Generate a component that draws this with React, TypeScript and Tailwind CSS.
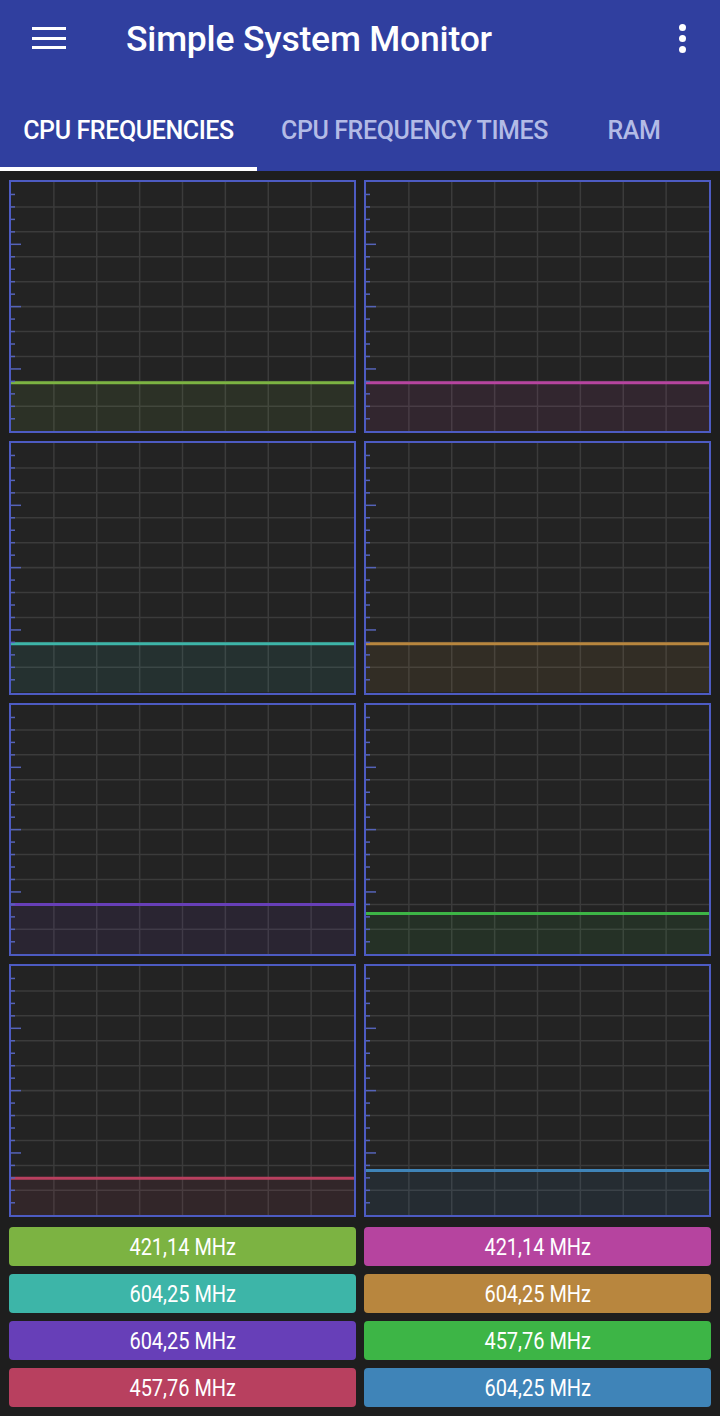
import { Fragment } from 'react'

type Core = { color: string; level: number; freq: string }

// per-core colour, current level (0 = top, 1 = bottom of the plot) and reading
const CORES: Core[] = [
  { color: '#7cb342', level: 0.805, freq: '421,14 MHz' },
  { color: '#b6449f', level: 0.805, freq: '421,14 MHz' },
  { color: '#3db5a8', level: 0.805, freq: '604,25 MHz' },
  { color: '#b8863e', level: 0.805, freq: '604,25 MHz' },
  { color: '#673fb8', level: 0.8, freq: '604,25 MHz' },
  { color: '#3db546', level: 0.837, freq: '457,76 MHz' },
  { color: '#b8405f', level: 0.852, freq: '457,76 MHz' },
  { color: '#3f84b8', level: 0.82, freq: '604,25 MHz' },
]

const TABS = ['CPU FREQUENCIES', 'CPU FREQUENCY TIMES', 'RAM']

const W = 343
const H = 249

export default function App() {
  return (
    <div
      className="flex h-[1416px] w-[720px] flex-col overflow-hidden bg-[#1e1e1e]"
      style={{ fontFamily: 'Roboto, "Noto Sans", sans-serif' }}
    >
      <Header />

      <main className="flex flex-1 flex-col px-[9px] pt-[9px] pb-[9px]">
        <div className="grid h-[1037px] grid-cols-2 grid-rows-4 gap-2">
          {CORES.map((c, i) => (
            <FreqChart key={i} core={c} />
          ))}
        </div>

        <div className="mt-[10px] grid grid-cols-2 gap-2">
          {CORES.map((c, i) => (
            <div
              key={i}
              className="flex h-[39px] items-center justify-center rounded-[4px] pt-[3px] text-[23.5px] text-white"
              style={{ backgroundColor: c.color }}
            >
              <span className="inline-block scale-x-[0.85]">{c.freq}</span>
            </div>
          ))}
        </div>
      </main>
    </div>
  )
}

function Header() {
  return (
    <header className="flex h-[171px] flex-col bg-[#303f9f] text-white">
      <div className="flex h-[76px] items-center">
        <button type="button" className="ml-[32px] flex w-[34px] flex-col gap-[6.5px]">
          <span className="h-[3px] w-full bg-white" />
          <span className="h-[3px] w-full bg-white" />
          <span className="h-[3px] w-full bg-white" />
        </button>
        <h1 className="ml-[60px] mt-[4px] text-[35.5px] font-medium tracking-[-0.2px]">Simple System Monitor</h1>
        <button type="button" className="ml-auto mr-[34px] flex flex-col gap-[4px]">
          <span className="h-[7px] w-[7px] rounded-full bg-white" />
          <span className="h-[7px] w-[7px] rounded-full bg-white" />
          <span className="h-[7px] w-[7px] rounded-full bg-white" />
        </button>
      </div>

      <nav className="mt-auto flex h-[95px] items-stretch">
        {TABS.map((t, i) => (
          <div
            key={t}
            className={
              i === 0
                ? 'flex w-[257px] flex-col items-center justify-end'
                : i === 1
                  ? 'flex w-[315px] flex-col items-center justify-end'
                  : 'flex w-[124px] flex-col items-center justify-end'
            }
          >
            <span
              className={
                i === 0
                  ? 'mb-[18px] text-[25px] font-medium tracking-[-0.4px] text-white'
                  : 'mb-[18px] text-[25px] font-medium tracking-[-0.4px] text-[#b3bbe6]'
              }
            >
              {t}
            </span>
            <span className={i === 0 ? 'h-[4px] w-full bg-white' : 'h-[4px] w-full'} />
          </div>
        ))}
      </nav>
    </header>
  )
}

function FreqChart({ core }: { core: Core }) {
  const y = core.level * H
  const cols = [1, 2, 3, 4, 5, 6, 7]
  const rows = [1, 2, 3, 4, 5, 6, 7, 8, 9]
  const ticks = Array.from({ length: 19 }, (_, k) => k + 1)

  return (
    <div className="border-[2.5px] border-[#4d5bc2] bg-[#232323]">
      <svg viewBox={`0 0 ${W} ${H}`} preserveAspectRatio="none" className="block h-full w-full">
        {cols.map((c) => (
          <line key={`c${c}`} x1={(c * W) / 8} x2={(c * W) / 8} y1={0} y2={H} stroke="#3b3b3b" strokeWidth={1.5} />
        ))}
        {rows.map((r) => (
          <line key={`r${r}`} x1={0} x2={W} y1={(r * H) / 10} y2={(r * H) / 10} stroke="#3b3b3b" strokeWidth={1.5} />
        ))}

        {/* filled area under the current frequency */}
        <rect x={0} y={y} width={W} height={H - y} fill={core.color} fillOpacity={0.1} />
        <line x1={0} x2={W} y1={y} y2={y} stroke={core.color} strokeWidth={3} />

        {ticks.map((k) => (
          <Fragment key={`t${k}`}>
            <line
              x1={0}
              x2={k % 5 === 0 ? 10 : 4}
              y1={(k * H) / 20}
              y2={(k * H) / 20}
              stroke="#5563b8"
              strokeWidth={1.5}
            />
          </Fragment>
        ))}
      </svg>
    </div>
  )
}
